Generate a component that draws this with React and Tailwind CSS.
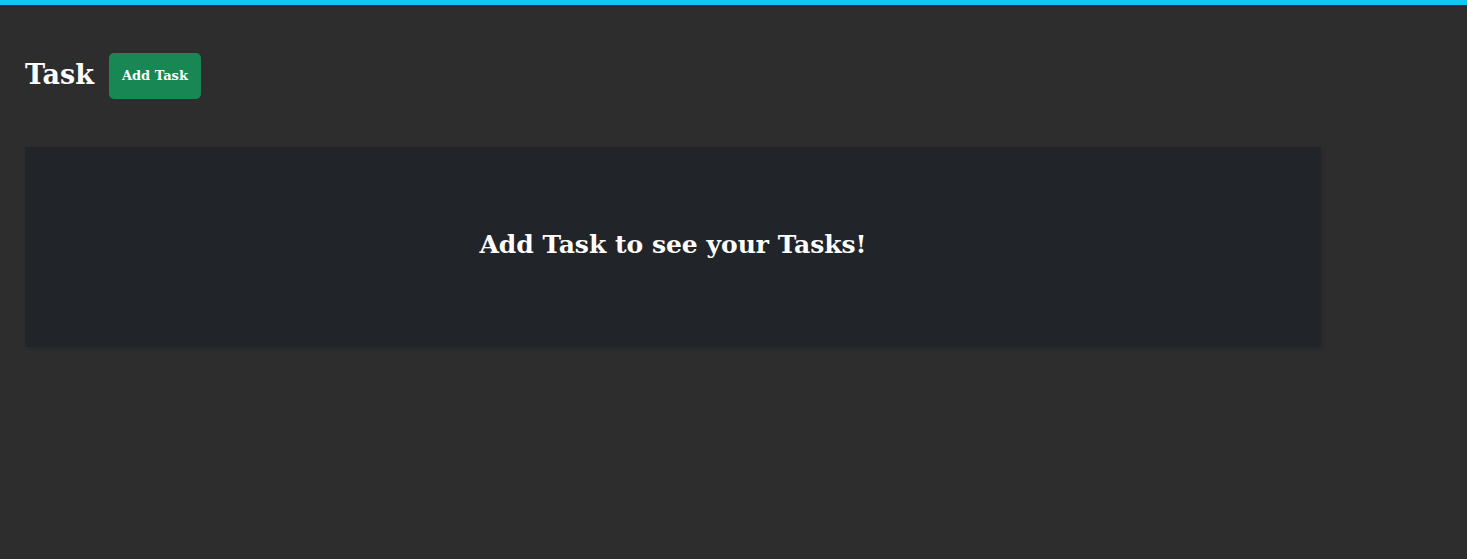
export default function App() {
  return (
    <div className="min-h-screen bg-[#2d2d2d] text-white" style={{ fontFamily: '"DejaVu Serif", serif' }}>
      <div className="h-[5px] bg-[#0dcaf0]" />
      <div className="px-[25px]">
        <div className="flex items-center gap-[15px] pt-12">
          <h1 className="-mt-1 text-[27px] font-bold leading-none">Task</h1>
          <button className="h-[46px] w-[92px] rounded-[5px] bg-[#198754] text-[13px] font-bold">Add Task</button>
        </div>
        <div className="mt-12 flex h-[200px] w-[1296px] items-center justify-center bg-[#212529] shadow-[2px_2px_4px_rgba(0,0,0,0.15)]">
          <h2 className="-mt-1 text-[25px] font-bold">Add Task to see your Tasks!</h2>
        </div>
      </div>
    </div>
  );
}
